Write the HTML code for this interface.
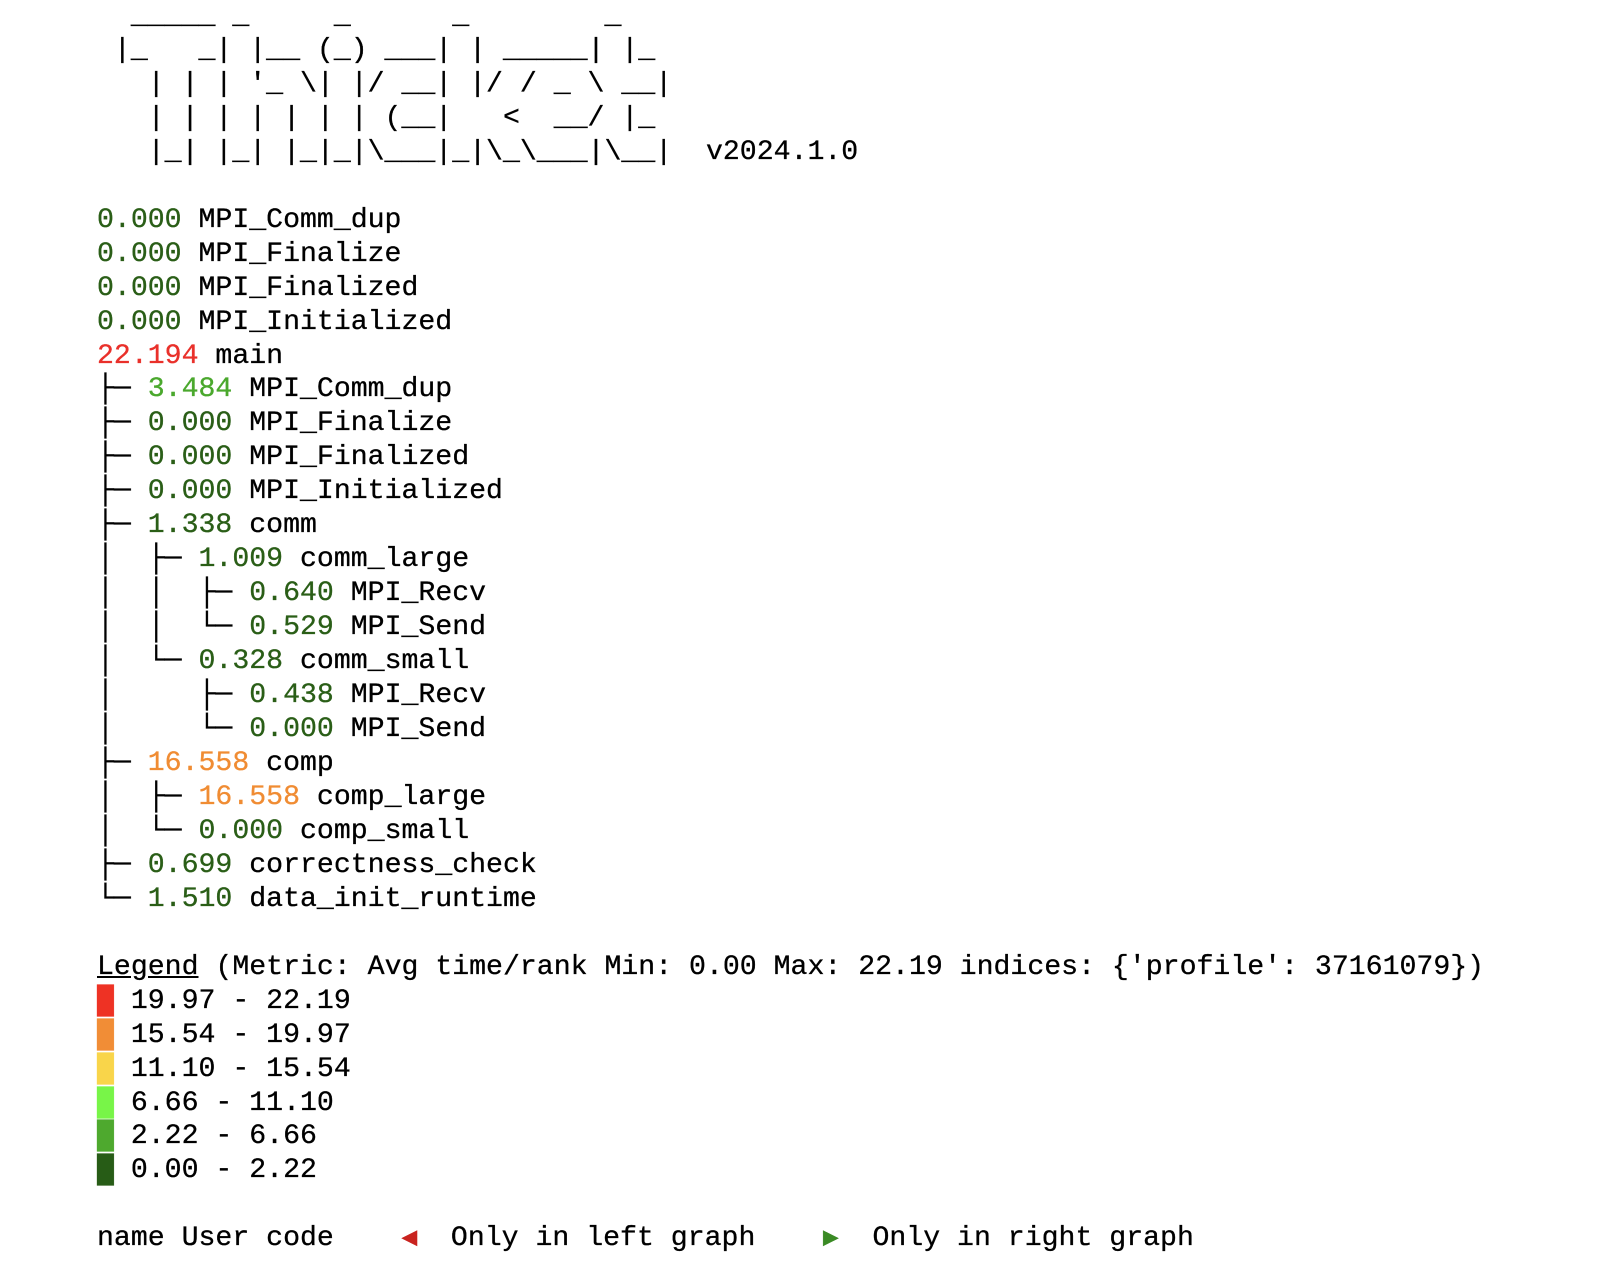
<!DOCTYPE html>
<html><head><meta charset="utf-8"><style>
html,body{margin:0;padding:0;background:#fff;width:1608px;height:1288px;overflow:hidden}
pre{margin:0;position:absolute;left:97px;top:0px;font-family:"Liberation Mono","DejaVu Sans Mono",monospace;font-size:28.2px;line-height:33.95px;color:#000;-webkit-text-stroke:0.3px currentColor}
.g{color:#2a5e17}.lg{color:#4aa82d}.r{color:#e9302a}.o{color:#f08c33}
.t{display:inline-block;width:1ch;text-align:center;font-size:26px}
u{text-decoration:underline}
</style></head><body><pre>  _____ _     _      _        _
 |_   _| |__ (_) ___| | _____| |_
   | | | '_ \| |/ __| |/ / _ \ __|
   | | | | | | | (__|   &lt;  __/ |_
   |_| |_| |_|_|\___|_|\_\___|\__|  v2024.1.0

<span class="g">0.000</span> MPI_Comm_dup
<span class="g">0.000</span> MPI_Finalize
<span class="g">0.000</span> MPI_Finalized
<span class="g">0.000</span> MPI_Initialized
<span class="r">22.194</span> main
├─ <span class="lg">3.484</span> MPI_Comm_dup
├─ <span class="g">0.000</span> MPI_Finalize
├─ <span class="g">0.000</span> MPI_Finalized
├─ <span class="g">0.000</span> MPI_Initialized
├─ <span class="g">1.338</span> comm
│  ├─ <span class="g">1.009</span> comm_large
│  │  ├─ <span class="g">0.640</span> MPI_Recv
│  │  └─ <span class="g">0.529</span> MPI_Send
│  └─ <span class="g">0.328</span> comm_small
│     ├─ <span class="g">0.438</span> MPI_Recv
│     └─ <span class="g">0.000</span> MPI_Send
├─ <span class="o">16.558</span> comp
│  ├─ <span class="o">16.558</span> comp_large
│  └─ <span class="g">0.000</span> comp_small
├─ <span class="g">0.699</span> correctness_check
└─ <span class="g">1.510</span> data_init_runtime

<u>Legend</u> (Metric: Avg time/rank Min: 0.00 Max: 22.19 indices: {'profile': 37161079})
<span style="color:#ee3224">█</span> 19.97 - 22.19
<span style="color:#f18d36">█</span> 15.54 - 19.97
<span style="color:#f9d54a">█</span> 11.10 - 15.54
<span style="color:#78f548">█</span> 6.66 - 11.10
<span style="color:#4ea92e">█</span> 2.22 - 6.66
<span style="color:#275c16">█</span> 0.00 - 2.22

name User code    <span class="t" style="color:#c9231f">◀</span>  Only in left graph    <span class="t" style="color:#3a8a24">▶</span>  Only in right graph</pre></body></html>
